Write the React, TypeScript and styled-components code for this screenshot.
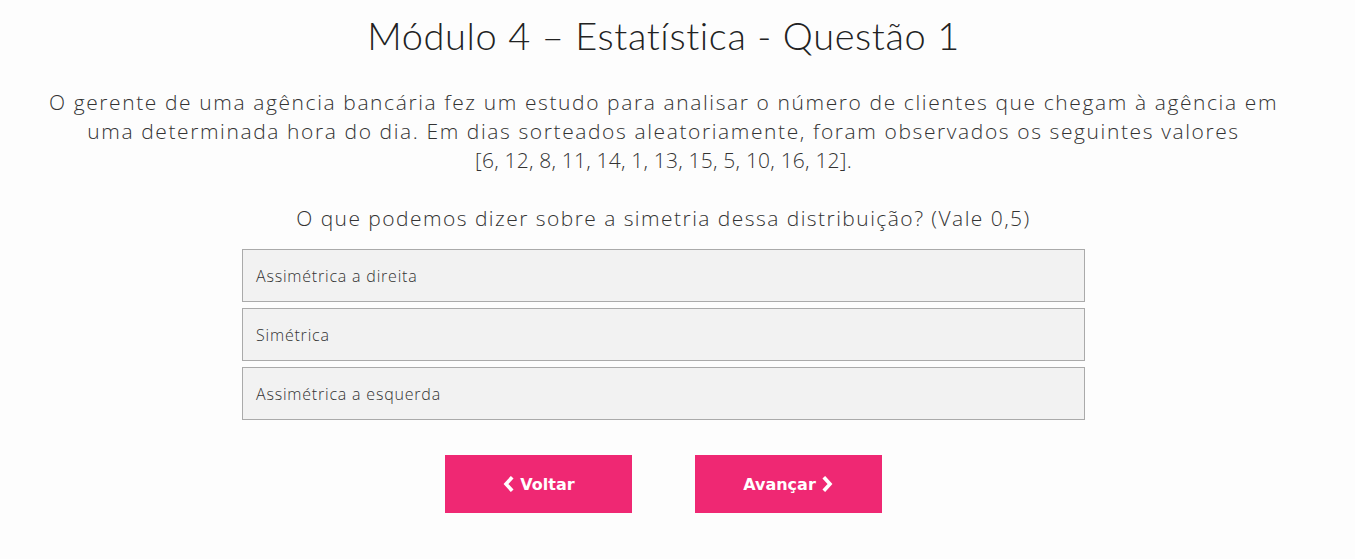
import styled, { createGlobalStyle } from "styled-components";

const GlobalStyle = createGlobalStyle`
  html, body {
    margin: 0;
    padding: 0;
    background: #fdfdfd;
  }
  body {
    font-family: "Open Sans", Lato, sans-serif;
    color: #333;
  }
`;

const Page = styled.div`
  width: 1327px;
  display: flex;
  flex-direction: column;
  align-items: center;
  padding-top: 11px;
`;

const Title = styled.h1`
  margin: 0;
  font-family: Lato, sans-serif;
  font-size: 38px;
  font-weight: 300;
  letter-spacing: 0.6px;
  color: #222;
  line-height: 48px;
`;

const Statement = styled.p`
  margin: 29px 0 0;
  font-size: 21px;
  font-weight: 300;
  letter-spacing: 1.6px;
  line-height: 29px;
  text-align: center;
  color: #333;
`;

// old-style digits of the original are narrower, so less tracking here
const Values = styled.span`
  letter-spacing: 0.2px;
`;

const Question = styled.p`
  margin: 28px 0 0;
  font-size: 21px;
  font-weight: 300;
  letter-spacing: 1.45px;
  line-height: 30px;
  text-align: center;
  color: #333;
`;

const Options = styled.div`
  margin-top: 16px;
  width: 843px;
  display: flex;
  flex-direction: column;
  gap: 6px;
`;

const Option = styled.button`
  box-sizing: border-box;
  height: 53px;
  width: 100%;
  display: flex;
  align-items: center;
  padding: 0 13px;
  background: #f2f2f2;
  border: 1px solid #aaa;
  font-family: "Open Sans", Lato, sans-serif;
  font-weight: 300;
  font-size: 16px;
  letter-spacing: 0.8px;
  color: #333;
  text-align: left;
  cursor: pointer;
`;

const Nav = styled.div`
  margin-top: 35px;
  display: flex;
  gap: 63px;
`;

const NavButton = styled.button`
  width: 187px;
  height: 58px;
  border: none;
  background: #ef2873;
  color: #fff;
  font-family: "DejaVu Sans", Verdana, sans-serif;
  font-weight: 700;
  font-size: 16px;
  display: flex;
  align-items: center;
  justify-content: center;
  gap: 5px;
  cursor: pointer;
`;

function Chevron({ dir }: { dir: "left" | "right" }) {
  const d = dir === "left" ? "M9 2.5 L4 8 L9 13.5" : "M4 2.5 L9 8 L4 13.5";
  return (
    <svg width="13" height="16" viewBox="0 0 13 16">
      <path d={d} fill="none" stroke="#fff" strokeWidth="3.6" strokeLinecap="square" />
    </svg>
  );
}

const answers = ["Assimétrica a direita", "Simétrica", "Assimétrica a esquerda"];

export default function App() {
  return (
    <>
      <GlobalStyle />
      <Page>
        <Title>Módulo 4 – Estatística - Questão 1</Title>
        <Statement>
          O gerente de uma agência bancária fez um estudo para analisar o número de clientes que chegam à agência em
          <br />
          uma determinada hora do dia. Em dias sorteados aleatoriamente, foram observados os seguintes valores
          <br />
          <Values>[6, 12, 8, 11, 14, 1, 13, 15, 5, 10, 16, 12].</Values>
        </Statement>
        <Question>O que podemos dizer sobre a simetria dessa distribuição? (Vale 0,5)</Question>
        <Options>
          {answers.map((a) => (
            <Option key={a}>{a}</Option>
          ))}
        </Options>
        <Nav>
          <NavButton>
            <Chevron dir="left" />
            Voltar
          </NavButton>
          <NavButton>
            Avançar
            <Chevron dir="right" />
          </NavButton>
        </Nav>
      </Page>
    </>
  );
}
